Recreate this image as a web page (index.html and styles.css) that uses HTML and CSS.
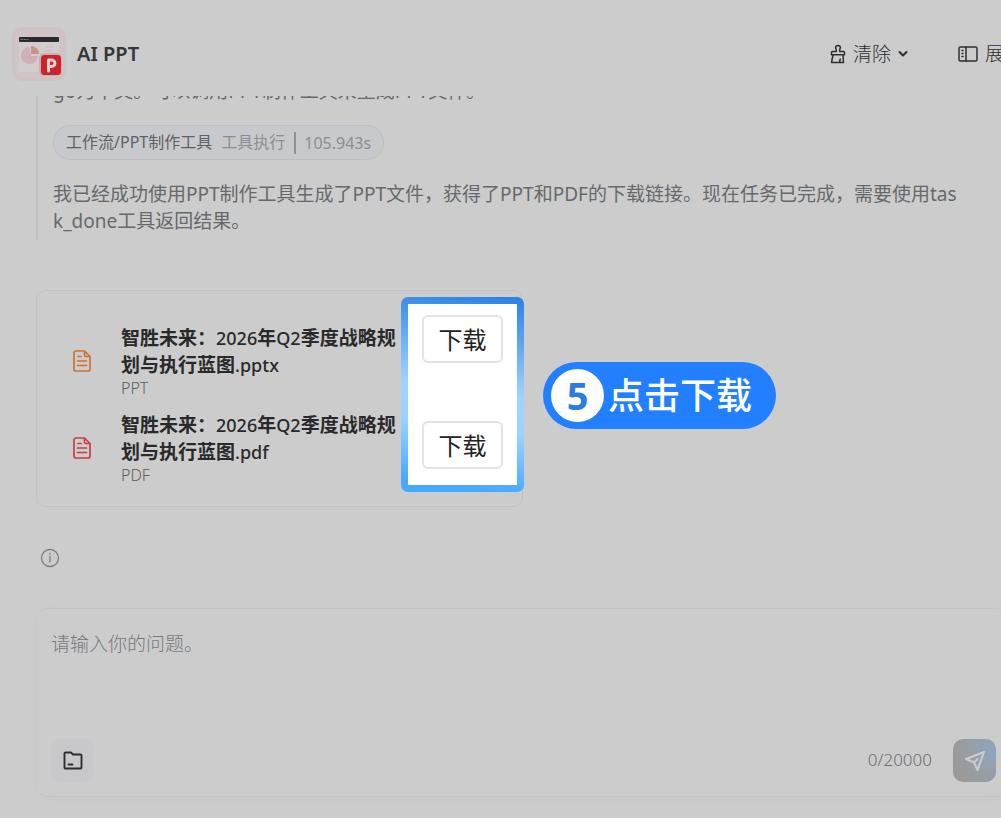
FILE: index.html
```html
<!DOCTYPE html>
<html lang="zh-CN">
<head>
<meta charset="utf-8">
<meta name="viewport" content="width=device-width, initial-scale=1">
<title>AI PPT</title>
<link rel="stylesheet" href="styles.css">
</head>
<body>
<header class="header">
  <svg class="logo" viewBox="0 0 54 54" aria-hidden="true">
    <rect width="54" height="54" rx="11" fill="#d0c1c3"/>
    <rect x="3" y="3" width="48" height="48" rx="8" fill="#cfc5c6"/>
    <path d="M7 11h40v32a2 2 0 0 1-2 2H9a2 2 0 0 1-2-2z" fill="#cfcdcd"/>
    <rect x="7" y="10" width="40" height="5" rx="1" fill="#2b2b2d"/>
    <path d="M9 12.500h1.500m1.500 0h1.500m1.500 0h1" stroke="#777" stroke-width="1"/>
    <path d="M17 20a8.500 8.500 0 1 0 9 9h-7z" fill="#d0b0b2"/>
    <path d="M19 19a8 8 0 0 1 8 8h-8z" fill="#cb9188"/>
    <path d="M34 20h7m-7 3.500h5" stroke="#d0b8ba" stroke-width="1.200"/>
    <rect x="27" y="26" width="23" height="23" rx="5" fill="#d2adaf"/>
    <rect x="29" y="28" width="20" height="20" rx="3.500" fill="#c9252b"/>
    <path d="M36.500 44V33h3.200a3.200 3.200 0 0 1 0 6.500h-3" fill="none" stroke="#e0d3d3" stroke-width="3"/>
  </svg>
  <h1 class="title">AI PPT</h1>
  <nav class="tools">
    <button class="tool" type="button">
      <svg class="icon-brush" viewBox="0 0 16 20" aria-hidden="true">
        <path d="M6.300 7.500V5.500L5.600 3.800a2.400 2.400 0 1 1 4.800 0L9.700 5.500v2H13.500a1 1 0 0 1 1 1v2.300H1.500V8.500a1 1 0 0 1 1-1zM3 11l-1.500 7.500h12L13 11M9.500 18.300l.7-3.300"/>
      </svg>
      <span>清除</span>
      <svg class="icon-chevron" viewBox="0 0 10 8" aria-hidden="true"><path d="M1.500 2l3.500 3.500L8.500 2"/></svg>
    </button>
    <button class="tool" type="button">
      <svg class="icon-panel" viewBox="0 0 20 16" aria-hidden="true">
        <rect x="1" y="1" width="18" height="14" rx="1.500"/><path d="M8 1v14M4 4.500h1M4 7.500h1M4 10.500h1"/>
      </svg>
      <span>展开</span>
    </button>
  </nav>
</header>

<main class="chat">
  <section class="thought">
    <p class="line">go为中文。可以调用PPT制作工具来生成PPT文件。</p>
    <div class="step">
      <span class="step-name">工作流/PPT制作工具</span>
      <span class="step-kind">工具执行</span>
      <span class="step-time">105.943s</span>
    </div>
    <p class="line">我已经成功使用PPT制作工具生成了PPT文件，获得了PPT和PDF的下载链接。现在任务已完成，需要使用task_done工具返回结果。</p>
  </section>

  <section class="files">
    <article class="file">
      <svg class="icon-doc doc-ppt" viewBox="0 0 18 22" aria-hidden="true">
        <path d="M3 1h8.500L17 6.500V19a2 2 0 0 1-2 2H3a2 2 0 0 1-2-2V3a2 2 0 0 1 2-2zM11.500 1v4a1.500 1.500 0 0 0 1.500 1.500h4M5 6.500h3M4.500 11h9M4.500 15.500h9"/>
      </svg>
      <div class="file-text">
        <h2 class="file-name">智胜未来：<span class="latin">2026</span>年<span class="latin">Q2</span>季度战略规划与执行蓝图<span class="latin">.pptx</span></h2>
        <p class="file-type">PPT</p>
      </div>
    </article>
    <article class="file">
      <svg class="icon-doc doc-pdf" viewBox="0 0 18 22" aria-hidden="true">
        <path d="M3 1h8.500L17 6.500V19a2 2 0 0 1-2 2H3a2 2 0 0 1-2-2V3a2 2 0 0 1 2-2zM11.500 1v4a1.500 1.500 0 0 0 1.500 1.500h4M5 6.500h3M4.500 11h9M4.500 15.500h9"/>
      </svg>
      <div class="file-text">
        <h2 class="file-name">智胜未来：<span class="latin">2026</span>年<span class="latin">Q2</span>季度战略规划与执行蓝图<span class="latin">.pdf</span></h2>
        <p class="file-type">PDF</p>
      </div>
    </article>
    <div class="spotlight">
      <div class="spotlight-body">
        <button class="download" type="button">下载</button>
        <button class="download" type="button">下载</button>
      </div>
    </div>
    <div class="callout"><span class="callout-number">5</span><span class="callout-text">点击下载</span></div>
  </section>

  <button class="info" type="button" aria-label="信息">
    <svg viewBox="0 0 20 20" aria-hidden="true"><circle cx="10" cy="10" r="8.500"/><path d="M10 5.500v.5M10 8.500v5.500"/></svg>
  </button>
</main>

<form class="composer">
  <textarea class="question" aria-label="问题" placeholder="请输入你的问题。"></textarea>
  <div class="composer-bar">
    <button class="attach" type="button" aria-label="文件">
      <svg viewBox="0 0 20 20" aria-hidden="true"><path d="M1.500 2.500a1 1 0 0 1 1-1H8L10 3.500h7.500a1 1 0 0 1 1 1v12a1 1 0 0 1-1 1h-15a1 1 0 0 1-1-1zM5.500 13.500h4"/></svg>
    </button>
    <span class="count">0/20000</span>
    <button class="send" type="button" aria-label="发送">
      <svg viewBox="0 0 22 22" aria-hidden="true"><path d="M20 2L2 9l8 3.500L13.500 20zM10 12.500l3.500-3.500"/></svg>
    </button>
  </div>
</form>
</body>
</html>
```

FILE: styles.css
```css
* { box-sizing: border-box; }

body {
  margin: 0;
  min-height: 100vh;
  overflow: hidden;
  background: #cccccc;
  color: #2d2e30;
  font-family: "Noto Sans", "Noto Sans CJK SC", sans-serif;
  font-size: 19px;
  line-height: 27px;
}

h1, h2, p { margin: 0; }

button {
  padding: 0;
  border: 0;
  background: none;
  color: inherit;
  font: inherit;
}

svg {
  display: block;
  flex: none;
  fill: none;
  stroke: currentColor;
  stroke-linejoin: round;
  stroke-linecap: round;
}

.header {
  display: flex;
  align-items: center;
  gap: 11px;
  padding: 27px 0 15px 12px;
}

.logo { width: 54px; height: 54px; stroke: none; }

.title {
  font-size: 20px;
  font-weight: 600;
  line-height: 54px;
  color: #363739;
}

.tools {
  display: flex;
  gap: 50px;
  margin: 0 -22px 0 auto;
}

.tool {
  display: flex;
  align-items: center;
  gap: 7px;
  white-space: nowrap;
  font-weight: 300;
}

.icon-brush { width: 16px; height: 20px; stroke-width: 1.5; }
.icon-chevron { width: 10px; height: 8px; stroke-width: 2; }
.icon-panel { width: 20px; height: 16px; stroke-width: 1.5; }

.chat {
  overflow: hidden;
  padding: 0 36px;
}

.thought {
  padding: 0 8px 5px 15px;
  border-left: 2px solid #c0c1c3;
  color: #66696c;
}

.thought > .line:first-child { margin-top: -18px; }
.line { word-break: break-all; }

.step {
  display: inline-flex;
  align-items: center;
  gap: 9px;
  height: 35px;
  margin: 20px 0 21px;
  padding: 0 12px;
  border: 1px solid #bcbec3;
  border-radius: 18px;
  background: #c8c9cc;
  font-size: 16px;
  vertical-align: top;
}

.step-name { color: #5e6166; }
.step-kind { color: #8b8e92; }
.step-time {
  padding-left: 8px;
  border-left: 2px solid #8f9194;
  line-height: 22px;
  color: #8b8e92;
}

.files {
  position: relative;
  display: grid;
  gap: 15px;
  width: 487px;
  margin-top: 50px;
  padding: 34px 120px 22px 36px;
  border: 1px solid #c1c1c2;
  border-radius: 10px;
}

.file { display: flex; align-items: center; gap: 30px; }
.file-text { flex: 1; }
.icon-doc { width: 18px; height: 22px; stroke-width: 1.7; }
.doc-ppt { color: #cb722f; }
.doc-pdf { color: #c63f45; }
.file-name { font-size: 19px; font-weight: 700; line-height: 27px; color: #29292b; }
.latin { font-size: 18px; font-weight: 500; }
.file-type { font-size: 16px; font-weight: 300; line-height: 18px; color: #5c5e60; }

.spotlight {
  position: absolute;
  top: 6px;
  right: -2px;
  width: 123px;
  height: 195px;
  padding: 7px;
  border-radius: 7px;
  background: linear-gradient(188deg, #2b80e5 0%, #3e8fe8 9%, #a0d4ff 48%, #9ad3ff 65%, #47a9fc 94%);
}

.spotlight-body {
  display: flex;
  flex-direction: column;
  align-items: center;
  justify-content: space-between;
  height: 100%;
  padding: 11px 0 16px;
  background: #ffffff;
}

.download {
  width: 81px;
  height: 48px;
  border: 2px solid #e3e3e4;
  border-radius: 6px;
  background: #ffffff;
  color: #222222;
  font-size: 24px;
  font-weight: 400;
}

.callout {
  position: absolute;
  top: 71px;
  left: 506px;
  display: flex;
  align-items: center;
  gap: 4px;
  height: 67px;
  padding: 0 24px 0 8px;
  border-radius: 34px;
  background: #227fff;
  color: #ffffff;
  white-space: nowrap;
}

.callout-number {
  width: 53px;
  height: 53px;
  border-radius: 50%;
  background: #ffffff;
  color: #2b7de2;
  font-size: 38px;
  font-weight: 700;
  line-height: 53px;
  text-align: center;
}

.callout-text { font-size: 36px; font-weight: 500; line-height: 53px; }

.info { display: block; margin: 41px 0 40px 4px; color: #7c7e82; }
.info svg { width: 20px; height: 20px; stroke-width: 1.3; }

.composer {
  display: flex;
  flex-direction: column;
  height: 189px;
  margin: 0 -8px 0 36px;
  padding: 22px 12px 14px 14px;
  border: 1px solid #c2c2cb;
  border-left-color: #c9c9cc;
  border-radius: 12px;
  box-shadow: 0 0 12px #c9c9ce;
}

.question {
  flex: 1;
  min-height: 0;
  padding: 0;
  border: 0;
  outline: 0;
  resize: none;
  background: none;
  color: inherit;
  font: inherit;
  font-weight: 300;
}

.question::placeholder { color: #75787d; opacity: 1; }

.composer-bar { display: flex; align-items: center; }

.attach, .send {
  display: grid;
  place-items: center;
  width: 43px;
  height: 43px;
  border-radius: 10px;
}

.attach { background: #c8c8ca; }
.attach svg { width: 20px; height: 20px; stroke-width: 1.9; }

.count { margin: 0 21px 0 auto; font-size: 17px; line-height: 24px; padding-bottom: 2px; font-weight: 300; color: #6c6f73; }

.send {
  background: radial-gradient(circle at 90% 30%, #8ba6c3 0%, #979fa8 40%, #999999 80%);
  color: #cccccc;
}
.send svg { width: 22px; height: 22px; stroke-width: 2; }
```
